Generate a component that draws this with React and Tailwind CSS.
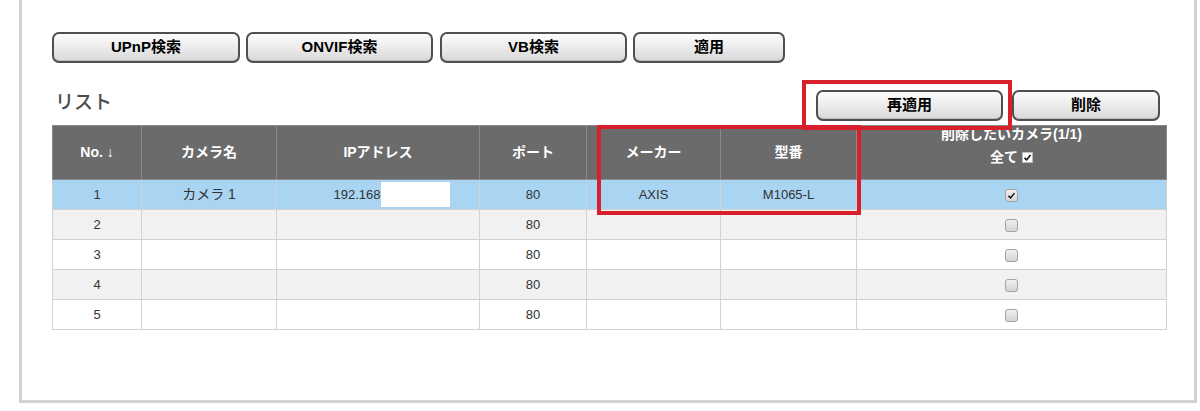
import React from 'react';

const font = { fontFamily: '"Liberation Sans", "Noto Sans CJK JP", sans-serif' };

// column widths in px, left to right
const cols = ['w-[89px]', 'w-[135px]', 'w-[203px]', 'w-[107px]', 'w-[134px]', 'w-[136px]', 'w-[310px]'];

const rows = [
  { no: 1, name: 'カメラ 1', ip: true, port: 80, maker: 'AXIS', model: 'M1065-L', checked: true },
  { no: 2, port: 80 },
  { no: 3, port: 80 },
  { no: 4, port: 80 },
  { no: 5, port: 80 },
];

function Button({ label, className }) {
  return (
    <button
      className={`h-[31px] rounded-[7px] border-2 border-[#4f4f4f] bg-linear-to-b from-[#fdfdfd] to-[#d9d9d9] text-[15px] font-bold text-black shadow-[inset_0_-1px_0_#bdbdbd] ${className}`}
    >
      {label}
    </button>
  );
}

function Check({ checked }) {
  return (
    <span className="inline-flex h-[13px] w-[13px] items-center justify-center rounded-[3px] border border-[#a3a3a3] bg-linear-to-b from-[#f0f0f0] to-[#d4d4d4] align-middle">
      {checked && (
        <svg viewBox="0 0 12 12" className="h-[9px] w-[9px]">
          <path d="M2 6.5 L4.8 9.2 L10 2.8" fill="none" stroke="#111" strokeWidth="2" />
        </svg>
      )}
    </span>
  );
}

function App() {
  return (
    <div className="relative h-[411px] w-[1200px] bg-white" style={font}>
      <div className="relative ml-[19px] h-[403px] w-[1178px] border-x-[3px] border-b-[3px] border-[#d3d3d3] pl-[30px] pt-[32px]">
        {/* search buttons */}
        <div className="flex">
          <Button label="UPnP検索" className="w-[188px]" />
          <Button label="ONVIF検索" className="ml-[6px] w-[187px]" />
          <Button label="VB検索" className="ml-[7px] w-[187px]" />
          <Button label="適用" className="ml-[6px] w-[152px]" />
        </div>

        {/* list title + actions */}
        <div className="mt-[27px] flex w-[1114px] items-end justify-between">
          <h2 className="mb-[9px] pl-[3px] text-[19px] font-medium leading-none text-[#4d4d4d]">リスト</h2>
          <div className="flex pr-[6px]">
            <Button label="再適用" className="w-[187px]" />
            <Button label="削除" className="ml-[9px] w-[148px]" />
          </div>
        </div>

        {/* camera table */}
        <table className="mt-[4px] w-[1114px] table-fixed border-collapse text-[13px] text-[#333]">
          <colgroup>
            {cols.map((c, i) => (
              <col key={i} className={c} />
            ))}
          </colgroup>
          <thead>
            <tr className="h-[54px] bg-[#6b6b6b] text-[14px] font-bold text-white">
              <th className="border border-[#8a8a8a]">No. ↓</th>
              <th className="border border-[#8a8a8a]">カメラ名</th>
              <th className="border border-[#8a8a8a]">IPアドレス</th>
              <th className="border border-[#8a8a8a]">ポート</th>
              <th className="border border-[#8a8a8a]">メーカー</th>
              <th className="border border-[#8a8a8a]">型番</th>
              <th className="border border-[#8a8a8a] p-0 align-top">
                <div className="h-[53px] overflow-hidden">
                  <div className="-mt-[3px] leading-[23px]">削除したいカメラ(1/1)</div>
                  <div className="flex items-center justify-center gap-[4px] leading-[23px]">
                    全て
                    <span className="inline-flex h-[11px] w-[11px] items-center justify-center border border-[#bbb] bg-white">
                      <svg viewBox="0 0 12 12" className="h-[9px] w-[9px]">
                        <path d="M2 6.5 L4.8 9.2 L10 2.8" fill="none" stroke="#111" strokeWidth="2.2" />
                      </svg>
                    </span>
                  </div>
                </div>
              </th>
            </tr>
          </thead>
          <tbody>
            {rows.map((r, i) => (
              <tr
                key={r.no}
                className={`h-[30px] text-center ${r.no === 1 ? 'bg-[#a9d4f2]' : i % 2 === 1 ? 'bg-[#f1f1f1]' : 'bg-white'}`}
              >
                <td className="border border-[#d2d2d2]">{r.no}</td>
                <td className="border border-[#d2d2d2] text-[14px]">{r.name}</td>
                <td className="border border-[#d2d2d2]">
                  {r.ip && (
                    <div className="flex items-center justify-center pl-[27px]">
                      <span>192.168</span>
                      <span className="h-[25px] w-[69px] bg-white" />
                    </div>
                  )}
                </td>
                <td className="border border-[#d2d2d2]">{r.port}</td>
                <td className="border border-[#d2d2d2]">{r.maker}</td>
                <td className="border border-[#d2d2d2]">{r.model}</td>
                <td className="border border-[#d2d2d2]">
                  <Check checked={r.checked} />
                </td>
              </tr>
            ))}
          </tbody>
        </table>

        {/* red highlight boxes */}
        <div className="absolute left-[780px] top-[80px] h-[50px] w-[210px] border-4 border-[#d7202c]" />
        <div className="absolute left-[575px] top-[125px] h-[90px] w-[264px] border-4 border-[#d7202c]" />
      </div>
    </div>
  );
}

export default App;
